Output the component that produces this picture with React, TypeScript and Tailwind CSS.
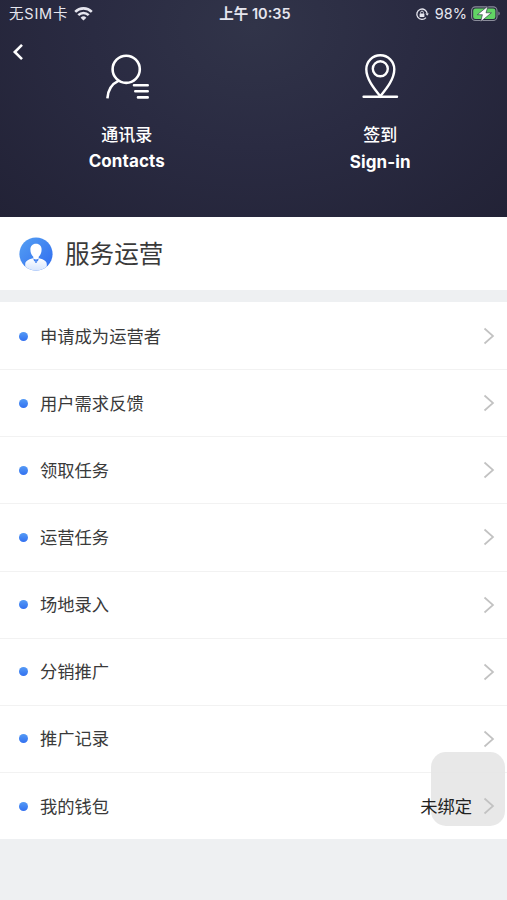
import React from 'react';

interface MenuItem {
  name: string;
  value?: string;
}

const menuItems: MenuItem[] = [
  { name: '申请成为运营者' },
  { name: '用户需求反馈' },
  { name: '领取任务' },
  { name: '运营任务' },
  { name: '场地录入' },
  { name: '分销推广' },
  { name: '推广记录' },
  { name: '我的钱包', value: '未绑定' },
];

const WifiIcon: React.FC = () => (
  <svg className="w-[19px] h-[14px]" viewBox="0 0 19 14" fill="none" stroke="currentColor" strokeWidth="2.6">
    <path d="M1.2 4.8a11.8 11.8 0 0 1 16.6 0" />
    <path d="M4.3 8.2a7.4 7.4 0 0 1 10.4 0" />
    <path d="M9.5 13.6 6.6 10.7a4.1 4.1 0 0 1 5.8 0z" fill="currentColor" stroke="none" />
  </svg>
);

const RotationLockIcon: React.FC = () => (
  <svg className="w-[14px] h-[14px]" viewBox="0 0 14 14" fill="none" stroke="currentColor">
    <path d="M11 10.6a5.2 5.2 0 1 1 1.2-3.8" strokeWidth="1.3" />
    <path d="M10.4 6.4h3.5l-1.7 2.4z" fill="currentColor" stroke="none" />
    <rect x="4.6" y="6.4" width="4.8" height="3.6" rx="0.5" fill="currentColor" stroke="none" />
    <path d="M5.6 6.6V5.5a1.4 1.4 0 0 1 2.8 0v1.1" strokeWidth="0.9" />
  </svg>
);

const BatteryIcon: React.FC = () => (
  <svg className="w-[30px] h-[16px]" viewBox="0 0 30 16" fill="none">
    <rect x="0.6" y="0.9" width="25.4" height="13.6" rx="3.8" stroke="#8b8d9b" strokeWidth="1.1" />
    <rect x="2.2" y="2.5" width="22.2" height="10.4" rx="2.2" fill="#62d465" />
    <path d="M27.4 5.6c1.8.6 1.8 3.4 0 4z" fill="#8b8d9b" />
    <path d="M17 0 6.4 8.7h5L9.6 15.8l10.8-9h-5.4z" fill="#fff" stroke="#29293f" strokeWidth="0.6" />
  </svg>
);

const ContactsIcon: React.FC = () => (
  <svg className="w-[46px] h-[48px]" viewBox="0 0 46 48" fill="none" stroke="currentColor" strokeWidth="2.6" strokeLinecap="round">
    <circle cx="22.2" cy="17.3" r="13.6" />
    <path d="M14.8 28.6C8 31.8 3.9 38 3.4 46.3" strokeLinecap="butt" />
    <path d="M30 33.2h13.7M31.3 39.2h12.4M34 45.4h9.7" />
  </svg>
);

const LocationIcon: React.FC = () => (
  <svg className="w-[40px] h-[48px]" viewBox="0 0 40 48" fill="none" stroke="currentColor" strokeWidth="2.4" strokeLinecap="round">
    <path d="M20.3 44.3C13.8 36.3 6.3 27 6.3 17.3a14 14 0 0 1 28 0C34.3 27 26.8 36.3 20.3 44.3z" />
    <circle cx="20.3" cy="16.8" r="7.5" />
    <path d="M3.6 44.8H37" />
  </svg>
);

const OperatorIcon: React.FC = () => (
  <svg className="w-[34px] h-[34px]" viewBox="0 0 34 34">
    <defs>
      <linearGradient id="operator-bg" x1="0" y1="0" x2="1" y2="1">
        <stop offset="0" stopColor="#55a0f3" />
        <stop offset="1" stopColor="#2f6bef" />
      </linearGradient>
      <linearGradient id="operator-body" x1="0" y1="0" x2="0" y2="1">
        <stop offset="0" stopColor="#fff" />
        <stop offset="1" stopColor="#d5e4fd" />
      </linearGradient>
      <clipPath id="operator-clip">
        <circle cx="17" cy="17" r="16.6" />
      </clipPath>
    </defs>
    <circle cx="17" cy="17" r="16.6" fill="url(#operator-bg)" />
    <path d="M17 6.8c-3.7 0-5.6 2.4-5.6 5.8 0 3.200 1.200 5.600 2.900 7.100v2.300h5.400v-2.300c1.700-1.500 2.900-3.900 2.900-7.100C22.600 9.200 20.700 6.800 17 6.800z" fill="#fff" />
    <path d="M6.200 34v-6.600c0-3.400 2.400-4.700 7.900-6.200l2.900 1.400 2.900-1.400c5.500 1.500 7.900 2.800 7.900 6.200V34H6.200z" fill="url(#operator-body)" clipPath="url(#operator-clip)" />
    <path d="m14.200 21.600 2.800 1.200 2.800-1.200-1 3-1.100-.8.300 1.900h-2l.3-1.900-1.100.8z" fill="#4382ef" />
  </svg>
);

const ChevronRight: React.FC = () => (
  <svg className="w-[12px] h-[18px]" viewBox="0 0 12 18" fill="none" stroke="#c2c2c2" strokeWidth="1.7">
    <path d="M1.5 1.500 10 9l-8.500 7.500" />
  </svg>
);

const StatusBar: React.FC = () => (
  <div className="grid grid-cols-3 items-center h-7 pl-[9px] pr-[6px] text-[#e6e6ef]">
    <div className="flex items-center gap-[6px] -mt-px">
      <span className="whitespace-nowrap text-[14.5px] tracking-[0.8px]">无SIM卡</span>
      <WifiIcon />
    </div>
    <div className="text-center font-semibold text-[14.5px] whitespace-nowrap">上午 10:35</div>
    <div className="flex items-center justify-end gap-[4px]">
      <RotationLockIcon />
      <span className="ml-[2px] text-[14.5px]">98%</span>
      <BatteryIcon />
    </div>
  </div>
);

const App: React.FC = () => {
  return (
    <div className="relative w-full h-[900px] overflow-hidden bg-[#eef0f2] text-[#3a3a3a] font-[Inter,'Noto_Sans_CJK_SC',sans-serif]">
      <header className="h-[217px] bg-[#232338] bg-[radial-gradient(ellipse_at_50%_12%,#313449_0%,#2a2b42_45%,#222236_100%)] text-white">
        <StatusBar />
        <div className="grid grid-cols-2 relative">
          <button className="absolute left-3 top-[15px]">
            <svg className="w-3 h-[18px]" viewBox="0 0 12 18" fill="none" stroke="currentColor" strokeWidth="2.6">
              <path d="M10 1.8 2.8 9l7.2 7.2" />
            </svg>
          </button>
          <div className="flex flex-col items-center pt-[24px]">
            <ContactsIcon />
            <span className="mt-[23px] leading-6 text-[17px] font-medium">通讯录</span>
            <span className="leading-7 text-[17px] font-bold tracking-[0.1px]">Contacts</span>
          </div>
          <div className="flex flex-col items-center pt-[24px]">
            <LocationIcon />
            <span className="mt-[23px] leading-6 text-[17px] font-medium">签到</span>
            <span className="leading-[30px] text-[17px] font-bold tracking-[0.1px]">Sign-in</span>
          </div>
        </div>
      </header>

      <div className="flex items-center h-[73px] pl-[19px] gap-3 bg-white">
        <OperatorIcon />
        <h1 className="pt-px text-[24.6px]">服务运营</h1>
      </div>

      {/* Menu list */}
      <ul className="mt-3 pt-px h-[537px] overflow-hidden bg-white">
        {menuItems.map((item) => (
          <li key={item.name} className="flex items-center h-[67.15px] pl-[19px] pr-3 border-b border-[#f2f2f2] last:border-transparent text-[17.3px]">
            <span className="w-[9px] h-[9px] mr-3 rounded-full bg-linear-to-b from-[#559af5] to-[#3370f0]"></span>
            <span className="flex-1 pt-px">{item.name}</span>
            {item.value && <span className="relative z-10 mr-[11px] pt-px text-[#222222]">{item.value}</span>}
            <span className="relative z-10"><ChevronRight /></span>
          </li>
        ))}
      </ul>

      {/* Floating assistive button */}
      <div className="absolute left-[431px] top-[752px] w-[74px] h-[74px] rounded-[15px] bg-[#e6e6e6]/90"></div>
    </div>
  );
};

export default App;
